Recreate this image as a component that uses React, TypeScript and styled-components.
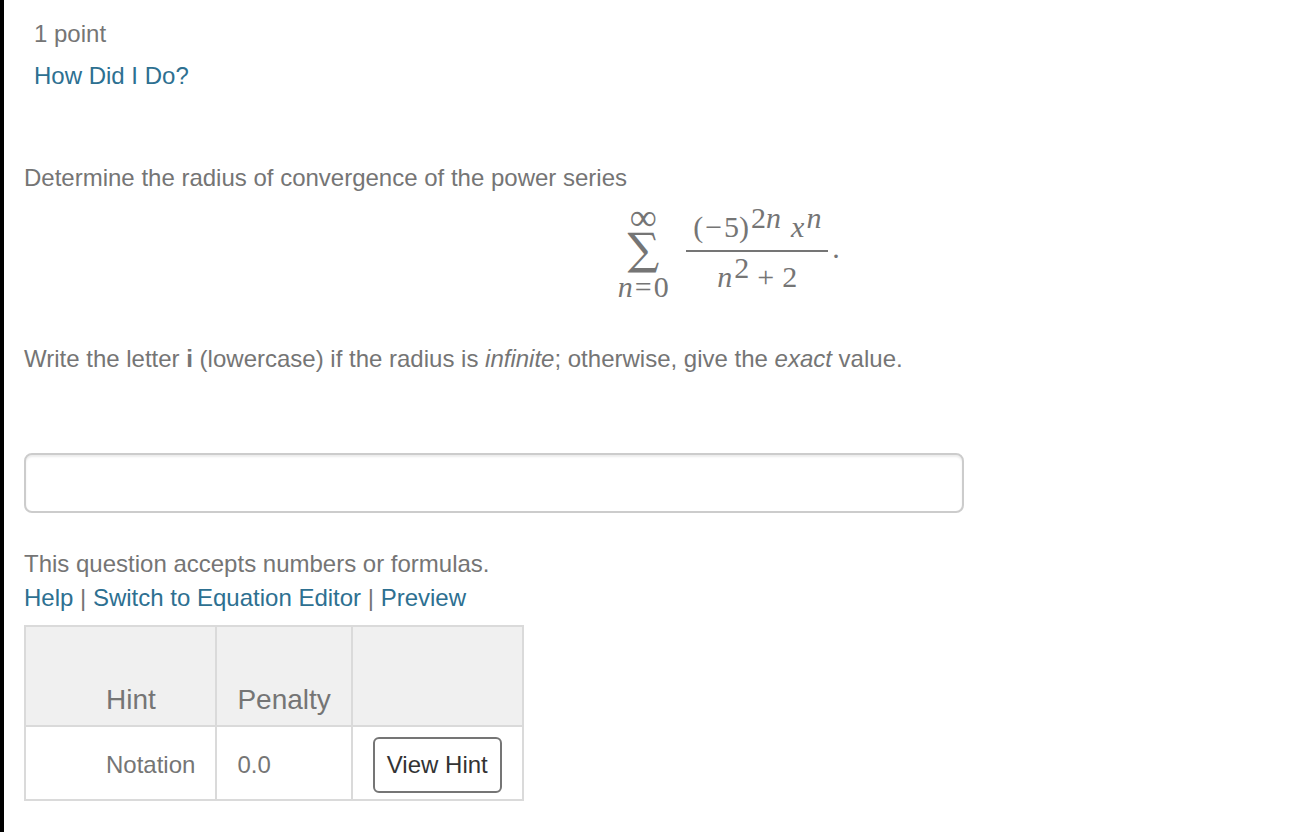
import React from "react";
import styled, { createGlobalStyle } from "styled-components";

const GlobalStyle = createGlobalStyle`
  *, *::before, *::after {
    box-sizing: border-box;
  }
  body {
    margin: 0;
    background: #fff;
    color: #757575;
    font-family: "Liberation Sans", Arial, Helvetica, sans-serif;
    font-size: 24px;
    line-height: 34px;
  }
`;

const Page = styled.main`
  min-height: 100vh;
  padding: 17px 0 30px 20px;
  border-left: 4px solid #000;
`;

const Meta = styled.header`
  display: flex;
  flex-direction: column;
  align-items: flex-start;
  gap: 8px;
  margin-bottom: 68px;
  padding-left: 10px;
`;

const Text = styled.p`
  margin: 0;
`;

const Link = styled.a`
  color: #2d7091;
  text-decoration: none;
  &:hover {
    text-decoration: underline;
  }
`;

const Formula = styled.div`
  display: flex;
  justify-content: center;
  align-items: center;
  height: 96px;
  margin: 9px 0 42px;
  padding-left: 122px;
  font-family: "Liberation Serif", "Times New Roman", serif;
  font-size: 30px;
  line-height: 24px;
  white-space: nowrap;
`;

const Sum = styled.div`
  display: flex;
  flex-direction: column;
  align-items: center;
  width: 54px;
  margin-right: 16px;
`;

const Limit = styled.span<{ $large?: boolean }>`
  font-size: ${(p) => (p.$large ? 38 : 30)}px;
  line-height: 24px;
`;

const Sigma = styled.span`
  margin: 4px 0;
  font-family: "DejaVu Math TeX Gyre", "DejaVu Serif", serif;
  font-size: 38px;
  line-height: 38px;
`;

const Fraction = styled.div`
  display: flex;
  flex-direction: column;
  align-items: center;
  width: 142px;
`;

const Numerator = styled.div`
  display: flex;
  justify-content: center;
  gap: 10px;
  width: 100%;
  height: 46px;
  border-bottom: 2px solid #757575;
`;

const Denominator = styled.div`
  height: 46px;
  padding-top: 4px;
`;

const Power = styled.span`
  margin-left: 2px;
  vertical-align: 9px;
`;

const Operator = styled.span<{ $space: number }>`
  margin: 0 ${(p) => p.$space}px;
`;

const Period = styled.span`
  margin: 0 0 8px 4px;
`;

const Answer = styled.input`
  display: block;
  width: 940px;
  max-width: 100%;
  height: 60px;
  margin: 77px 0 34px;
  padding: 8px 12px;
  border: 2px solid #ccc;
  border-radius: 8px;
  background: #fff;
  box-shadow: inset 0 2px 2px rgba(0, 0, 0, 0.075);
  color: #555;
  font: inherit;
`;

const HintTable = styled.table`
  margin-top: 10px;
  border-collapse: collapse;
`;

const HeadCell = styled.th<{ $first?: boolean }>`
  height: 100px;
  padding: 8px 20px;
  padding-left: ${(p) => (p.$first ? 80 : 20)}px;
  border: 2px solid #dadada;
  background: #f0f0f0;
  font-size: 28px;
  font-weight: 400;
  text-align: left;
  vertical-align: bottom;
`;

const Cell = styled.td<{ $first?: boolean }>`
  padding: 10px 20px 6px;
  padding-left: ${(p) => (p.$first ? 80 : 20)}px;
  border: 2px solid #dadada;
`;

const HintButton = styled.button`
  display: block;
  height: 56px;
  padding: 0 12px;
  border: 2px solid #757575;
  border-radius: 6px;
  background: #fff;
  color: #333;
  font: inherit;
  cursor: pointer;
`;

export default function App() {
  return (
    <>
      <GlobalStyle />
      <Page>
        <Meta>
          <Text>1 point</Text>
          <Link href="#results">How Did I Do?</Link>
        </Meta>

        <Text>Determine the radius of convergence of the power series</Text>
        <Formula>
          <Sum>
            <Limit $large>∞</Limit>
            <Sigma>∑</Sigma>
            <Limit>
              <i>n</i>
              <Operator $space={2}>=</Operator>0
            </Limit>
          </Sum>
          <Fraction>
            <Numerator>
              <span>
                (<Operator $space={2}>−</Operator>5)
                <Power>
                  2<i>n</i>
                </Power>
              </span>
              <span>
                <i>x</i>
                <Power>
                  <i>n</i>
                </Power>
              </span>
            </Numerator>
            <Denominator>
              <i>n</i>
              <Power>2</Power>
              <Operator $space={8}>+</Operator>2
            </Denominator>
          </Fraction>
          <Period>.</Period>
        </Formula>
        <Text id="instructions">
          Write the letter <b>i</b> (lowercase) if the radius is <i>infinite</i>; otherwise, give the{" "}
          <i>exact</i> value.
        </Text>

        <Answer type="text" aria-labelledby="instructions" />

        <Text>This question accepts numbers or formulas.</Text>
        <Text>
          <Link href="#help">Help</Link> | <Link href="#editor">Switch to Equation Editor</Link> |{" "}
          <Link href="#preview">Preview</Link>
        </Text>

        <HintTable>
          <thead>
            <tr>
              <HeadCell $first>Hint</HeadCell>
              <HeadCell>Penalty</HeadCell>
              <HeadCell />
            </tr>
          </thead>
          <tbody>
            <tr>
              <Cell $first>Notation</Cell>
              <Cell>0.0</Cell>
              <Cell>
                <HintButton type="button">View Hint</HintButton>
              </Cell>
            </tr>
          </tbody>
        </HintTable>
      </Page>
    </>
  );
}
